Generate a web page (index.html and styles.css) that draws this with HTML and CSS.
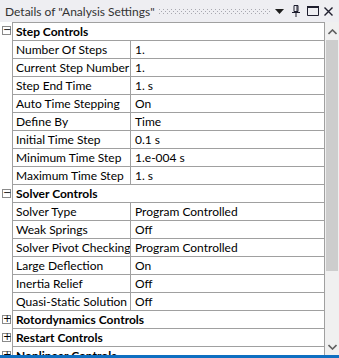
FILE: index.html
```html
<!DOCTYPE html>
<html lang="en">
<head>
    <meta charset="UTF-8">
    <title>Details of "Analysis Settings"</title>
    <link rel="stylesheet" href="styles.css">
</head>
<body>
    <div class="panel">
        <div class="titlebar">
            <span class="title">Details of "Analysis Settings"</span>
            <svg class="grip" height="6">
                <defs>
                    <pattern id="dots" width="4" height="4" patternUnits="userSpaceOnUse">
                        <rect x="0" y="0" width="1" height="1" fill="#a8a8b0"/>
                        <rect x="2" y="2" width="1" height="1" fill="#a8a8b0"/>
                    </pattern>
                </defs>
                <rect width="100%" height="6" fill="url(#dots)"/>
            </svg>
            <svg class="tb-icon drop" width="9" height="5" viewBox="0 0 9 5">
                <path d="M0 0h9L4.5 5z" fill="#1e1e1e"/>
            </svg>
            <svg class="tb-icon pin" width="10" height="12" viewBox="0 0 10 12">
                <path d="M3 .5h4v6H3z M6 .5v6" fill="none" stroke="#1e1e2e"/>
                <path d="M1 7.5h8M5 8v4" fill="none" stroke="#1e1e2e"/>
            </svg>
            <svg class="tb-icon max" width="12" height="10" viewBox="0 0 12 10">
                <path d="M.5 1.5h11v8H.5z" fill="none" stroke="#1e1e2e"/>
                <path d="M0 1h12" stroke="#1e1e2e" stroke-width="2"/>
            </svg>
            <svg class="tb-icon close" width="9" height="9" viewBox="0 0 9 9">
                <path d="M.5.5l8 8M8.5.5l-8 8" stroke="#1e1e2e" stroke-width="1.4"/>
            </svg>
        </div>
        <div class="content">
            <div class="tree">
                <div class="row group first">
                    <span class="exp">&minus;</span>
                    <div class="cells"><span class="head">Step Controls</span></div>
                </div>
                <div class="row"><span class="exp-blank"></span><div class="cells"><span class="name">Number Of Steps</span><span class="value">1.</span></div></div>
                <div class="row"><span class="exp-blank"></span><div class="cells"><span class="name">Current Step Number</span><span class="value">1.</span></div></div>
                <div class="row"><span class="exp-blank"></span><div class="cells"><span class="name">Step End Time</span><span class="value">1. s</span></div></div>
                <div class="row"><span class="exp-blank"></span><div class="cells"><span class="name">Auto Time Stepping</span><span class="value">On</span></div></div>
                <div class="row"><span class="exp-blank"></span><div class="cells"><span class="name">Define By</span><span class="value">Time</span></div></div>
                <div class="row"><span class="exp-blank"></span><div class="cells"><span class="name">Initial Time Step</span><span class="value">0.1 s</span></div></div>
                <div class="row"><span class="exp-blank"></span><div class="cells"><span class="name">Minimum Time Step</span><span class="value">1.e-004 s</span></div></div>
                <div class="row"><span class="exp-blank"></span><div class="cells"><span class="name">Maximum Time Step</span><span class="value">1. s</span></div></div>
                <div class="row group">
                    <span class="exp">&minus;</span>
                    <div class="cells"><span class="head">Solver Controls</span></div>
                </div>
                <div class="row"><span class="exp-blank"></span><div class="cells"><span class="name">Solver Type</span><span class="value">Program Controlled</span></div></div>
                <div class="row"><span class="exp-blank"></span><div class="cells"><span class="name">Weak Springs</span><span class="value">Off</span></div></div>
                <div class="row"><span class="exp-blank"></span><div class="cells"><span class="name">Solver Pivot Checking</span><span class="value">Program Controlled</span></div></div>
                <div class="row"><span class="exp-blank"></span><div class="cells"><span class="name">Large Deflection</span><span class="value">On</span></div></div>
                <div class="row"><span class="exp-blank"></span><div class="cells"><span class="name">Inertia Relief</span><span class="value">Off</span></div></div>
                <div class="row"><span class="exp-blank"></span><div class="cells"><span class="name">Quasi-Static Solution</span><span class="value">Off</span></div></div>
                <div class="row group">
                    <span class="exp">+</span>
                    <div class="cells"><span class="head">Rotordynamics Controls</span></div>
                </div>
                <div class="row group">
                    <span class="exp">+</span>
                    <div class="cells"><span class="head">Restart Controls</span></div>
                </div>
                <div class="row group">
                    <span class="exp">+</span>
                    <div class="cells"><span class="head">Nonlinear Controls</span></div>
                </div>
            </div>
            <div class="scrollbar">
                <svg class="arrow" width="9" height="6" viewBox="0 0 9 6">
                    <path d="M.5 5L4.5 1l4 4" fill="none" stroke="#606060" stroke-width="1.6"/>
                </svg>
                <div class="track">
                    <div class="thumb"></div>
                </div>
                <svg class="arrow" width="9" height="6" viewBox="0 0 9 6">
                    <path d="M.5 1l4 4 4-4" fill="none" stroke="#606060" stroke-width="1.6"/>
                </svg>
            </div>
        </div>
    </div>
    <div class="statusbar"></div>
</body>
</html>
```

FILE: styles.css
```css
*{
    margin: 0;
    padding: 0;
    box-sizing: border-box;
}
body{
    width: 339px;
    height: 358px;
    overflow: hidden;
    font-family: Lato, "Noto Sans", sans-serif;
    font-size: 12px;
    color: #000;
    background: #fff;
}
.panel{
    height: 355px;
    overflow: hidden;
}
.titlebar{
    height: 22px;
    display: flex;
    align-items: center;
    background: #eeeef2;
    padding: 0 6px 0 5px;
}
.title{
    color: #333;
    white-space: nowrap;
}
.grip{
    flex: 1;
    margin: 1px 4px 0 4px;
}
.tb-icon{
    flex: none;
}
.pin{
    margin-left: 7px;
}
.max{
    margin-left: 6px;
}
.close{
    margin-left: 5px;
}
.content{
    display: flex;
    height: 333px;
}
.tree{
    width: 325px;
}
.row{
    display: flex;
    height: 18px;
}
.exp,.exp-blank{
    width: 12px;
    flex: none;
}
.exp{
    width: 9px;
    height: 9px;
    margin: 4px 1px 0 2px;
    border: 1px solid #8a8a8a;
    font-size: 10px;
    line-height: 6px;
    text-align: center;
    font-family: "DejaVu Sans", sans-serif;
}
.cells{
    flex: 1;
    display: flex;
    border-left: 1px solid #a0a0a0;
    border-right: 1px solid #a0a0a0;
    border-bottom: 1px solid #a0a0a0;
    line-height: 17px;
    white-space: nowrap;
}
.first .cells{
    border-top: 1px solid #a0a0a0;
}
.first{
    height: 19px;
}
.head{
    font-weight: bold;
    padding-left: 3px;
}
.name{
    width: 118px;
    padding-left: 3px;
    border-right: 1px solid #a0a0a0;
    overflow: hidden;
}
.value{
    padding-left: 4px;
}
.scrollbar{
    width: 14px;
    background: #f0f0f0;
    display: flex;
    flex-direction: column;
    align-items: center;
}
.arrow{
    flex: none;
    margin: 7px 0 5px;
}
.track{
    flex: 1;
    width: 100%;
    padding: 0 1px;
}
.thumb{
    height: 231px;
    background: #cdcdcd;
}
.statusbar{
    height: 3px;
    background: #0f6fc1;
}
```
